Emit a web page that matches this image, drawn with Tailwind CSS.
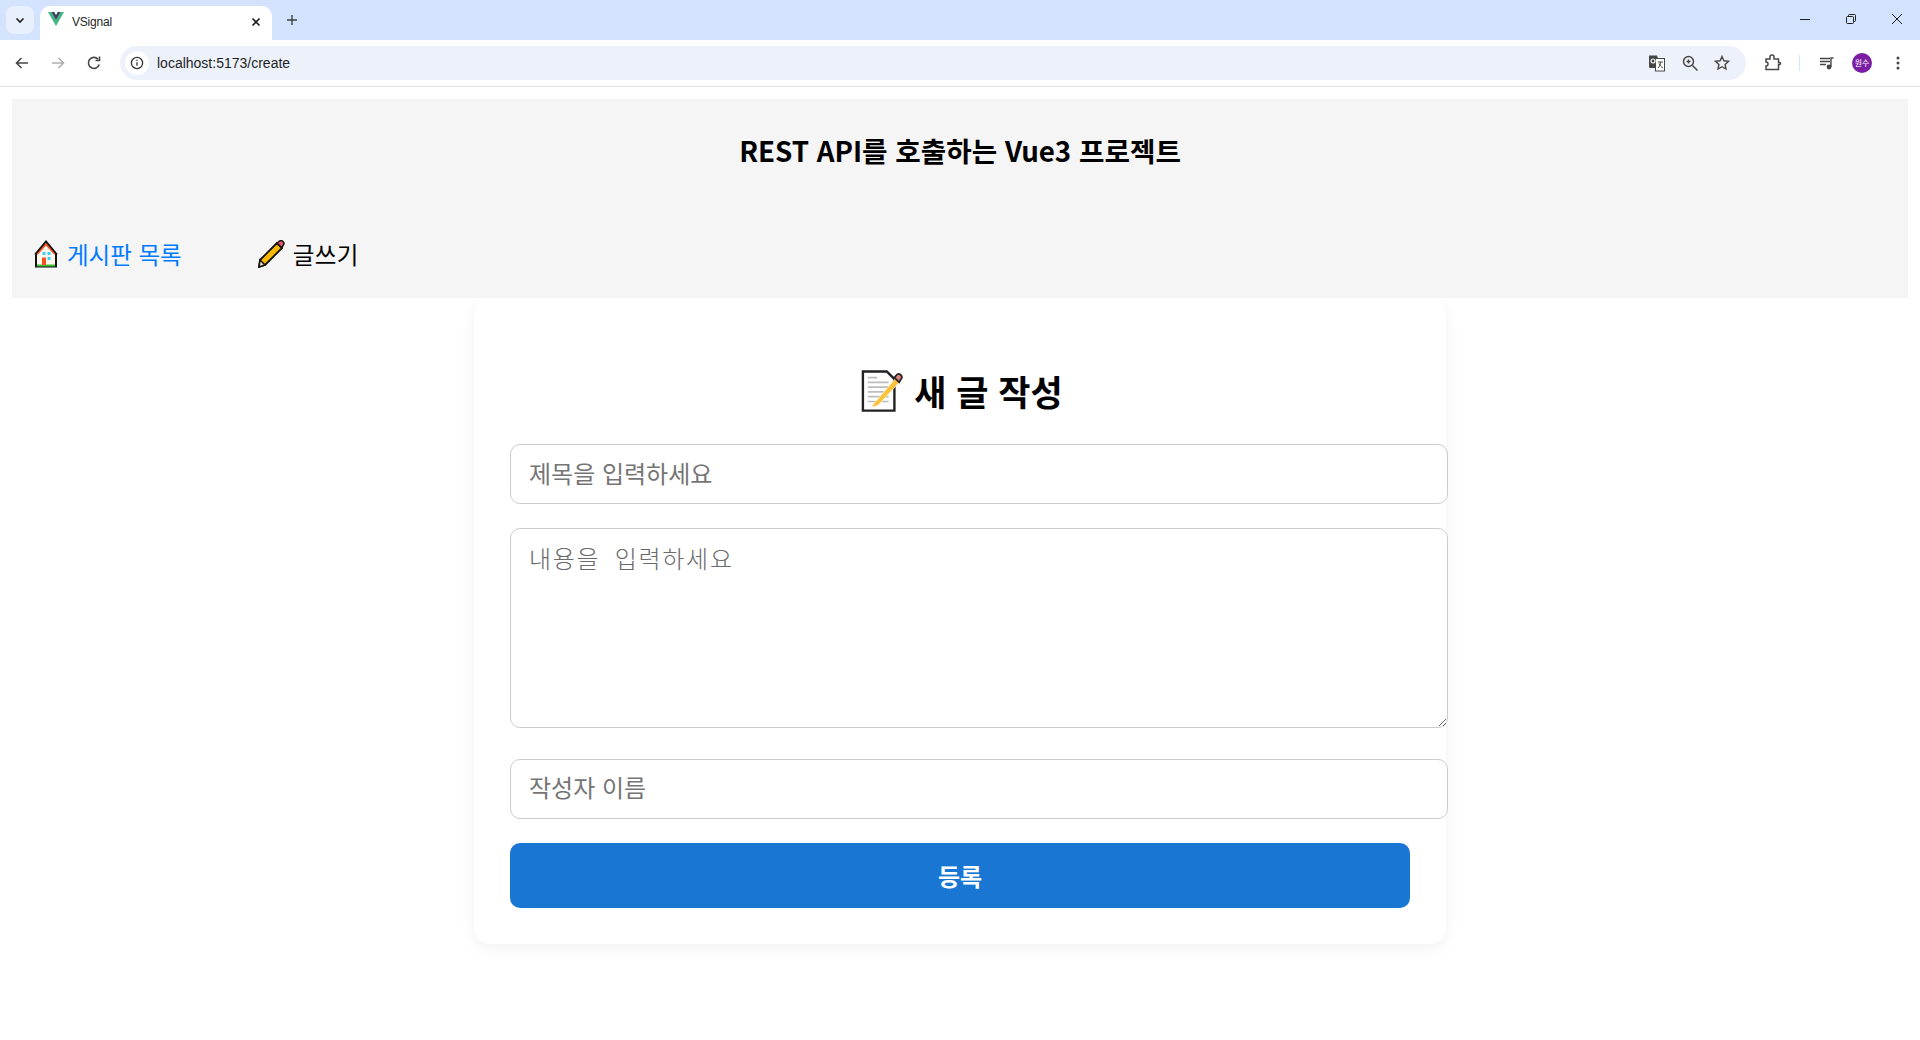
<!DOCTYPE html>
<html lang="ko">
<head>
<meta charset="utf-8">
<title>VSignal</title>
<script src="https://cdn.jsdelivr.net/npm/@tailwindcss/browser@4"></script>
</head>
<body class="bg-white font-['Noto_Sans_CJK_KR','Noto_Sans',sans-serif] overflow-hidden h-[1040px]">

<!-- Tab strip -->
<div class="h-10 bg-[#d3e3fd] flex items-end relative font-['Liberation_Sans','Noto_Sans_CJK_KR',sans-serif]">
  <div class="absolute left-[6px] top-[6px] w-7 h-7 rounded-lg bg-[#e9f0fd] flex items-center justify-center">
    <svg width="12" height="12" viewBox="0 0 12 12" fill="none" stroke="#1f1f1f" stroke-width="1.6"><path d="M2.5 4.5 6 8l3.5-3.5"/></svg>
  </div>
  <div class="ml-10 w-[232px] h-[34px] bg-white rounded-t-[10px] flex items-center pl-2 pr-[8px] pb-[3px] relative">
    <svg width="16" height="14" viewBox="0 0 16 14" class="mr-[8px] -mt-[5px]"><path d="M0 0h3.2L8 8.2 12.8 0H16L8 14z" fill="#41b883"/><path d="M3.2 0h3L8 3.1 9.8 0h3L8 8.2z" fill="#35495e"/></svg>
    <span class="text-[12px] text-[#1f1f1f] tracking-[-0.2px] mt-[1px]">VSignal</span>
    <svg width="10" height="10" viewBox="0 0 10 10" class="ml-auto mr-[3px]" stroke="#1f1f1f" stroke-width="1.6"><path d="M1.5 1.5l7 7M8.5 1.5l-7 7"/></svg>
  </div>
  <svg width="12" height="12" viewBox="0 0 12 12" class="ml-[14px] mb-[14px]" stroke="#3c4043" stroke-width="1.4"><path d="M6 1v10M1 6h10"/></svg>
  <div class="ml-auto flex h-10 items-center pb-[2px]">
    <div class="w-[46px] flex justify-center"><svg width="12" height="12" viewBox="0 0 12 12" stroke="#1f1f1f"><path d="M1 6.5h10"/></svg></div>
    <div class="w-[46px] flex justify-center"><svg width="12" height="12" viewBox="0 0 12 12" fill="none" stroke="#1f1f1f"><rect x="1.5" y="3.5" width="7" height="7" rx="1"/><path d="M3.5 3.5V2.5a1 1 0 0 1 1-1h5a1 1 0 0 1 1 1v5a1 1 0 0 1-1 1h-1"/></svg></div>
    <div class="w-[46px] flex justify-center"><svg width="12" height="12" viewBox="0 0 12 12" stroke="#1f1f1f"><path d="M1 1l10 10M11 1 1 11"/></svg></div>
  </div>
</div>

<!-- Toolbar -->
<div class="h-[47px] bg-white border-b border-[#e3e3e3] flex items-center rounded-tr-[8px] rounded-tl-[8px] pb-[1px] relative font-['Liberation_Sans','Noto_Sans_CJK_KR',sans-serif]">
  <div class="w-[120px] flex items-center pl-[14px] gap-[20px]">
    <svg width="16" height="16" viewBox="0 0 16 16" fill="none" stroke="#474747" stroke-width="1.6"><path d="M14 8H3M7.5 3 2.5 8l5 5"/></svg>
    <svg width="16" height="16" viewBox="0 0 16 16" fill="none" stroke="#b0b0b0" stroke-width="1.6"><path d="M2 8h11M8.5 3l5 5-5 5"/></svg>
    <svg width="16" height="16" viewBox="0 0 16 16" fill="none" stroke="#474747" stroke-width="1.6"><path d="M13.2 9.5A5.5 5.5 0 1 1 12 4.2"/><path d="M13.5 1.5v4h-4" /></svg>
  </div>
  <div class="w-[1626px] h-[34px] bg-[#edf2fa] rounded-full flex items-center pl-[5px] pr-[16px]">
    <div class="w-6 h-6 rounded-full bg-white flex items-center justify-center">
      <svg width="14" height="14" viewBox="0 0 14 14" fill="none" stroke="#333" stroke-width="1.3"><circle cx="7" cy="7" r="5.6"/><path d="M7 6.2v3.6M7 3.7v1.3"/></svg>
    </div>
    <span class="ml-[8px] text-[14px] text-[#1f1f1f] mt-[1px]">localhost:5173/create</span>
    <div class="ml-auto flex items-center gap-[16px]">
      <svg width="18" height="18" viewBox="0 0 18 18"><path d="M1 1.500h8l1 3h-2v9.500H2a1 1 0 0 1-1-1z" fill="#474747"/><rect x="7.500" y="4.500" width="9" height="12.500" fill="#fff" stroke="#474747"/><path d="M10 8h5M12.500 8c0 3-1 4.500-2.500 6M11 9.500c1 2 2.500 3.500 4 4.500" fill="none" stroke="#474747"/><circle cx="5" cy="7" r="2" fill="none" stroke="#fff" stroke-width="1.200"/></svg>
      <svg width="16" height="16" viewBox="0 0 16 16" fill="none" stroke="#474747" stroke-width="1.500"><circle cx="6.500" cy="6.500" r="5"/><path d="m10.500 10.500 5 5M4.500 6.500h4M6.500 4.500v4"/></svg>
      <svg width="16" height="16" viewBox="0 0 16 16" fill="none" stroke="#474747" stroke-width="1.400"><path d="m8 1.500 1.900 4.300 4.600.5-3.400 3.100.9 4.600L8 11.700l-4 2.300.9-4.600L1.500 6.300l4.600-.5z"/></svg>
    </div>
  </div>
  <svg width="18" height="18" viewBox="0 0 18 18" fill="none" stroke="#474747" stroke-width="1.500" class="ml-[18px]"><path d="M2 5h4V3a2 2 0 0 1 4 0v2h4.500v3.500h1.500a1.500 1.500 0 0 1 0 2h-1.500V15.500H2V12a2 2 0 0 0 0-4z"/></svg>
  <div class="w-[1px] h-4 bg-[#d3e3fd] ml-[17px]"></div>
  <svg width="16" height="16" viewBox="0 0 16 16" fill="none" stroke="#474747" stroke-width="1.400" class="ml-[19px]"><path d="M1 3.500h10M1 6.500h10M1 9.500h6M14.500 3H12v9"/><circle cx="10" cy="12" r="1.700" fill="#474747"/></svg>
  <div class="w-5 h-5 rounded-full bg-[#7b1fa2] ml-[17px] flex items-center justify-center text-[8px] text-white font-['Noto_Sans_CJK_KR',sans-serif]">원수</div>
  <svg width="16" height="16" viewBox="0 0 16 16" fill="#474747" class="ml-[18px]"><circle cx="8" cy="3" r="1.500"/><circle cx="8" cy="8" r="1.500"/><circle cx="8" cy="13" r="1.500"/></svg>
</div>

<!-- Page -->
<div class="px-3 pt-3">
  <header class="h-[199px] bg-[#f5f5f5] relative">
    <h1 class="pt-[29px] text-center text-[27.7px] leading-[44px] font-semibold text-black">REST API를 호출하는 Vue3 프로젝트</h1>
    <nav class="absolute left-[21px] top-[137px] flex items-center text-[23.5px] leading-[36px]">
      <a class="flex items-center text-[#007bff]">
        <svg width="26" height="28" viewBox="0 0 26 28" class="mr-[8px]"><path d="M1.500 26.500V15L13 2l11.500 13v11.500z" fill="#fff7ec"/><path d="M4 14 13 4l9 10" fill="none" stroke="#f4511e" stroke-width="2"/><path d="M2 14.500 13 1.500l11 13" fill="none" stroke="#111" stroke-width="1.800"/><path d="M3 14v12.500h20V14" fill="none" stroke="#111" stroke-width="2"/><rect x="4" y="24.500" width="18" height="2" fill="#3fc02f"/><rect x="9" y="17.500" width="4" height="7.500" fill="#f4511e"/><rect x="9.500" y="12" width="3" height="3" fill="#35d3fa"/><rect x="14.500" y="12" width="3" height="3" fill="#35d3fa"/><rect x="14.500" y="17" width="3" height="3" fill="#35d3fa"/></svg>
        게시판 목록
      </a>
      <a class="flex items-center text-black ml-[75px]">
        <svg width="28" height="28" viewBox="0 0 28 28" class="mr-[8px]"><path d="M3 20 20 3l5 5L8 25l-6 2z" fill="#f9b800" stroke="#111" stroke-width="1.800" stroke-linejoin="round"/><path d="m20 3 2-1.500a2.500 2.500 0 0 1 4 4L25 8z" fill="#e8566b" stroke="#111" stroke-width="1.500"/><path d="M3 20l5 5-6 2z" fill="#f3d9b1" stroke="#111" stroke-width="1.500"/></svg>
        <span class="tracking-[0.4px]">글쓰기</span>
      </a>
    </nav>
  </header>

  <main class="w-[972px] h-[646px] mx-auto bg-white rounded-2xl shadow-[0_4px_16px_rgba(0,0,0,0.06)] px-9 pt-[66px]">
    <h2 class="flex items-center justify-center pl-[4px] text-[35px] leading-[54px] h-[54px] font-bold text-black">
      <svg width="42" height="44" viewBox="0 0 44 44" class="mr-[11px]"><path d="M2 1.500h25l8 8v33H2z" fill="#fff" stroke="#222" stroke-width="2.500"/><path d="M7 8h10M7 13h22M7 18h22M7 23h22M7 28h22M7 33h22" stroke="#bdbdbd" stroke-width="1.800"/><path d="M12 37 36 9l4 4-22 24-6 2z" fill="#fcc23a" stroke="#fff" stroke-width=".6"/><path d="m35 8 2-2.500a3 3 0 0 1 5 4L40 13z" fill="#d9817c" stroke="#222" stroke-width="1.800"/></svg>
      새 글 작성
    </h2>
    <input placeholder="제목을 입력하세요" class="block mt-[26px] w-[938px] h-[60px] max-w-none px-[18px] pb-[3px] text-[24px] border border-[#cccccc] rounded-[10px] bg-white placeholder:text-[#757575] outline-none">
    <textarea placeholder="내용을 입력하세요" class="block mt-6 w-[938px] h-[200px] max-w-none px-[18px] pt-[14px] pb-[14px] text-[24px] leading-[29px] tracking-[1.7px] [word-spacing:6px] font-light border border-[#cccccc] rounded-[10px] bg-white placeholder:text-[#6a6a6a] outline-none resize-y font-['Noto_Sans_CJK_KR',monospace]"></textarea>
    <input placeholder="작성자 이름" class="block mt-[31px] w-[938px] h-[60px] max-w-none px-[18px] pb-[5px] text-[24px] border border-[#cccccc] rounded-[10px] bg-white placeholder:text-[#757575] outline-none">
    <button class="block mt-6 w-[900px] h-[65px] bg-[#1976d2] text-white text-[24px] font-bold rounded-[10px]">등록</button>
  </main>
</div>
</body>
</html>
